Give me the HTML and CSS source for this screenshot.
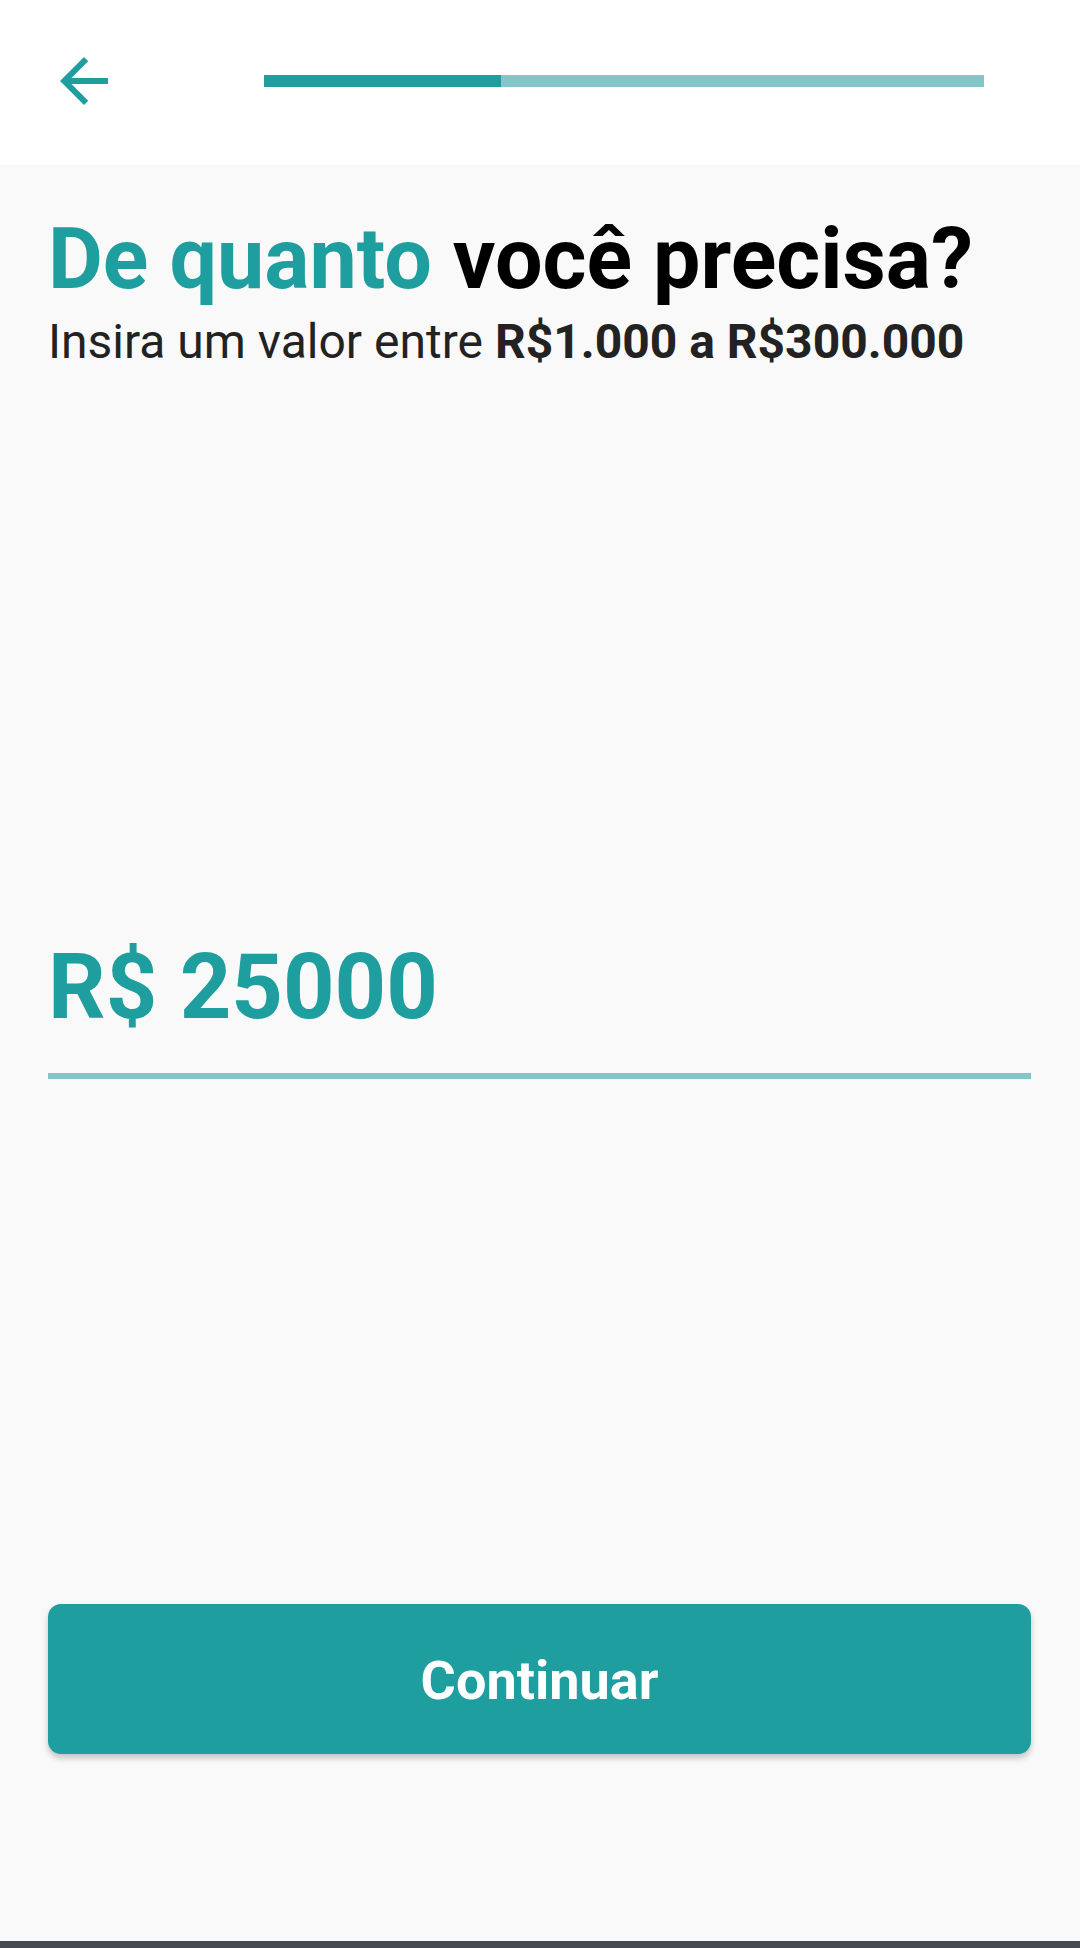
FILE: index.html
```html
<!DOCTYPE html>
<html lang="pt-BR">
<head>
<meta charset="utf-8">
<title>De quanto você precisa?</title>
<link rel="stylesheet" href="styles.css">
</head>
<body>
<div class="screen">
  <header class="topbar">
    <button class="back" aria-label="Voltar">
      <svg viewBox="0 0 24 24" width="72" height="72"><path fill="#1e9e9e" d="M20 11H7.83l5.59-5.59L12 4l-8 8 8 8 1.41-1.41L7.83 13H20v-2z"/></svg>
    </button>
    <div class="progress"><div class="progress-fill"></div></div>
  </header>
  <main class="content">
    <h1 class="title"><span class="accent">De quanto</span> você precisa?</h1>
    <p class="subtitle">Insira um valor entre <strong>R$1.000 a R$300.000</strong></p>
    <div class="amount-field">
      <div class="amount">R$ 25000</div>
    </div>
    <button class="cta">Continuar</button>
  </main>
  <div class="navbar"></div>
</div>
</body>
</html>
```
FILE: styles.css
```css
* { box-sizing: border-box; }
html, body { margin: 0; padding: 0; }
body {
  font-family: Roboto, "Noto Sans", "Liberation Sans", sans-serif;
  background: #f9f9f9;
  width: 1080px;
  height: 1948px;
  overflow: hidden;
}
.screen {
  display: flex;
  flex-direction: column;
  height: 1948px;
}
.topbar {
  height: 165px;
  background: #ffffff;
  display: flex;
  align-items: flex-start;
  padding: 45px 0 0 48px;
  flex-shrink: 0;
}
.back {
  width: 72px;
  height: 72px;
  padding: 0;
  border: 0;
  background: none;
  display: block;
}
.back svg { display: block; }
.progress {
  margin-left: 144px;
  margin-top: 30px;
  width: 720px;
  height: 12px;
  background: #84c5c8;
}
.progress-fill {
  width: 237px;
  height: 12px;
  background: #1e9e9e;
}
.content {
  flex: 1;
  padding: 0 48px;
  display: flex;
  flex-direction: column;
}
.title {
  margin: 45px 0 0 0;
  font-size: 84.4px;
  line-height: 100px;
  font-weight: 700;
  color: #000;
  white-space: nowrap;
}
.accent { color: #1e9e9e; }
.subtitle {
  margin: 4px 0 0 0;
  font-size: 48px;
  line-height: 56px;
  color: #222;
  white-space: nowrap;
}
.subtitle strong { font-weight: 700; }
.amount-field {
  margin-top: 563px;
  padding-bottom: 30px;
  border-bottom: 6px solid #84c5c8;
  width: 983px;
}
.amount {
  font-size: 90px;
  line-height: 110px;
  font-weight: 700;
  color: #1e9e9e;
}
.cta {
  margin-top: 525px;
  width: 983px;
  height: 150px;
  border: 0;
  border-radius: 13px;
  background: #1e9e9e;
  color: #fff;
  font-family: Roboto, "Noto Sans", "Liberation Sans", sans-serif;
  font-size: 54px;
  line-height: 64px;
  font-weight: 700;
  padding: 4px 0 0 0;
  box-shadow: 0 4px 6px rgba(0,0,0,0.22);
}
.navbar {
  height: 7px;
  background: #454b52;
  flex-shrink: 0;
}
```
